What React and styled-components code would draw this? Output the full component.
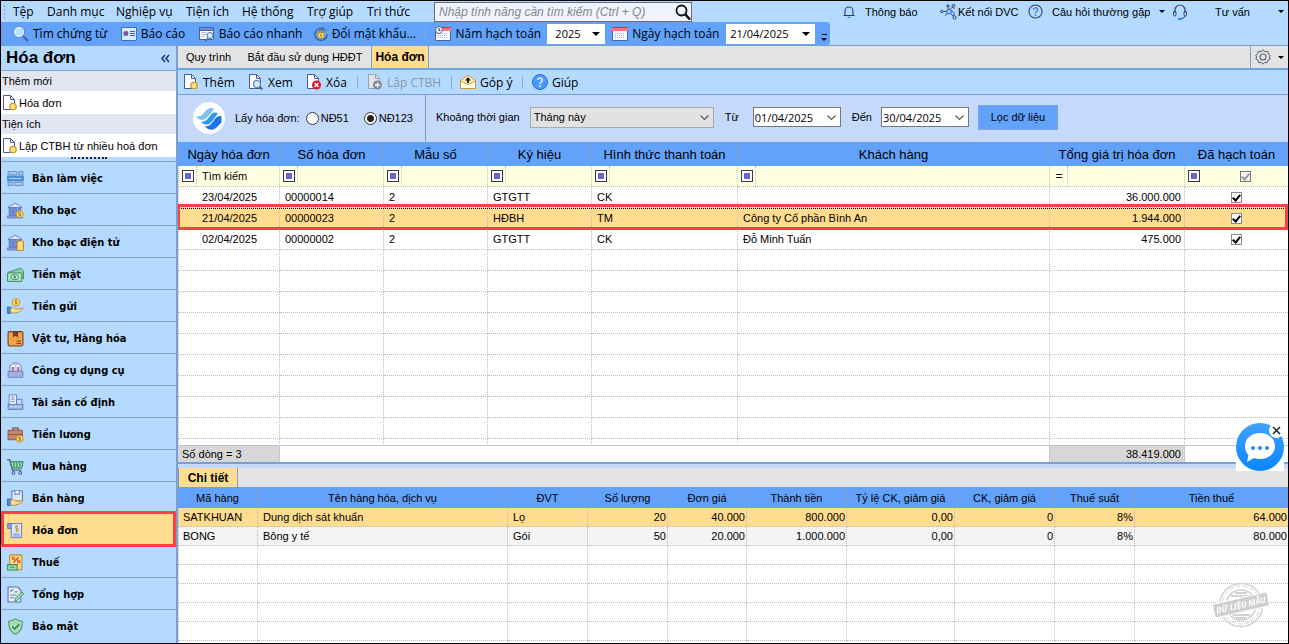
import React, { useState } from "react";
import styled, { createGlobalStyle } from "styled-components";

const ui = `"Open Sans", "Noto Sans", sans-serif`;
const sans = `"Liberation Sans", Arial, sans-serif`;
const tahoma = `"DejaVu Sans Condensed", "DejaVu Sans", sans-serif`;

const sky = "#b5daff";
const blue = "#62a2fb";
const line = "#7ba0d0";
const amber = "#ffdc8f";
const red = "#fa4040";
const grey = "#e3e3e3";
const dots = "1px dotted #bdbdbd";

const GlobalStyle = createGlobalStyle`
  * {
    box-sizing: border-box;
  }
  body {
    margin: 0;
    background: ${sky};
    color: #000;
    font-family: ${sans};
    font-size: 11px;
  }
  button, input, select {
    font: inherit;
    color: inherit;
    margin: 0;
    padding: 0;
  }
  button {
    background: none;
    border: 0;
    text-align: left;
    white-space: nowrap;
  }
  svg {
    flex: none;
    display: block;
  }
`;

const Window = styled.div`
  display: flex;
  flex-direction: column;
  height: 100vh;
  min-height: 600px;
  border: 1px solid #000;
  background: ${sky};
  overflow: hidden;
`;

/* ---------- top bars ---------- */

const MenuBar = styled.nav`
  display: flex;
  align-items: center;
  height: 21px;
  padding-left: 2px;
  font-family: ${ui};
  font-size: 12px;
`;

const Grip = styled.div`
  width: 4px;
  height: 16px;
  margin-right: 6px;
  background: radial-gradient(#8f9fb8 1px, transparent 1px) 0 0 / 3px 4px;
`;

const MenuItem = styled.button`
  width: ${(p) => p.$w}px;
`;

const SearchBox = styled.label`
  display: flex;
  align-items: center;
  width: 258px;
  height: 20px;
  padding-left: 4px;
  background: #f0f4ff;
  border: 1px solid #6d6d6d;
  font-family: ${sans};
  font-size: 12px;
  input {
    flex: 1;
    min-width: 0;
    border: 0;
    outline: 0;
    background: none;
    font-style: italic;
  }
  input::placeholder {
    color: #858585;
  }
`;

const Support = styled.div`
  display: flex;
  align-items: center;
  margin-left: auto;
  font-family: ${sans};
  font-size: 11px;
`;

const SupportItem = styled.button`
  display: flex;
  align-items: center;
  gap: ${(p) => p.$gap || 3}px;
  width: ${(p) => p.$w}px;
  height: 20px;
`;

const Arrow = styled.span`
  width: 0;
  height: 0;
  border: 3px solid transparent;
  border-top-color: #000;
  border-bottom: 0;
  margin-left: ${(p) => (p.$end ? "auto" : "0")};
  margin-right: ${(p) => p.$right || 0}px;
`;

const ToolBar = styled.div`
  display: flex;
  height: 23px;
`;

const ToolStrip = styled.div`
  display: flex;
  align-items: center;
  padding-left: 2px;
  width: 829px;
  background: ${blue};
  border-radius: 0 3px 3px 0;
  font-family: ${ui};
  font-size: 12px;
`;

const Tool = styled.button`
  display: flex;
  align-items: center;
  gap: 4px;
  width: ${(p) => p.$w}px;
  color: ${(p) => (p.disabled ? "#8996a8" : "inherit")};
`;

const ToolLabel = styled.label`
  display: flex;
  align-items: center;
  gap: 4px;
  width: ${(p) => p.$w}px;
  white-space: nowrap;
`;

const Divider = styled.i`
  width: 1px;
  height: 13px;
  margin-right: ${(p) => p.$right || 0}px;
  background: #86a9d9;
`;

const Combo = styled.span`
  display: flex;
  align-items: center;
  position: relative;
  width: ${(p) => p.$w}px;
  height: ${(p) => p.$h || 20}px;
  margin-right: ${(p) => p.$right || 0}px;
  background: ${(p) => (p.$grey ? "#e2e2e2" : "#fff")};
  border: 1px solid ${(p) => p.$border || "#fff"};
  font-family: ${(p) => (p.$grey ? sans : ui)};
  font-size: 11px;
  select, input {
    appearance: none;
    width: 100%;
    height: 100%;
    padding-left: ${(p) => p.$pad || 3}px;
    border: 0;
    outline: 0;
    background: none;
  }
  svg, ${Arrow} {
    position: absolute;
    right: 4px;
    pointer-events: none;
  }
  ${Arrow} {
    border-width: 4px 4px 0;
    margin: 0;
  }
`;

const Overflow = styled.button`
  width: 12px;
  height: 10px;
  margin-top: 10px;
  display: flex;
  flex-direction: column;
  align-items: center;
  gap: 3px;
  &::before {
    content: "";
    width: 5px;
    height: 1px;
    background: #000;
  }
`;

/* ---------- body ---------- */

const Body = styled.div`
  flex: 1;
  min-height: 0;
  display: flex;
  border-top: 1px solid ${line};
`;

const Sidebar = styled.aside`
  flex: none;
  width: 177px;
  border-right: 2px solid ${line};
  display: flex;
  flex-direction: column;
`;

const SideTitle = styled.div`
  display: flex;
  align-items: center;
  justify-content: space-between;
  height: 25px;
  padding: 0 6px 0 5px;
  border-bottom: 1px solid ${line};
  h1 {
    margin: 0;
    font-size: 17px;
    line-height: 24px;
  }
`;

const SideGroup = styled.h2`
  margin: 0;
  height: 20px;
  line-height: 20px;
  padding-left: 1px;
  background: #e2e6f0;
  font-size: 11px;
  font-weight: normal;
`;

const SideLink = styled.a`
  display: flex;
  align-items: center;
  gap: 1px;
  height: 23px;
  padding-left: 1px;
  background: #fff;
  color: #000;
  text-decoration: none;
  white-space: nowrap;
`;

const Splitter = styled.div`
  height: 4px;
  display: flex;
  justify-content: center;
  &::before {
    content: "";
    width: 36px;
    border-top: 2px dotted #223;
    height: 0;
  }
`;

const NavLink = styled.a`
  position: relative;
  flex: none;
  display: flex;
  align-items: center;
  gap: 8px;
  height: 32px;
  padding: 1px 0 0 6px;
  border-top: 1px solid ${line};
  color: #000;
  text-decoration: none;
  font-family: ${tahoma};
  font-size: 11px;
  font-weight: bold;
  background: ${(p) => (p.$active ? amber : "transparent")};
  &::after {
    content: "";
    display: ${(p) => (p.$active ? "block" : "none")};
    position: absolute;
    inset: -3px 0 -2px;
    border: 3px solid ${red};
    z-index: 1;
  }
`;

const Content = styled.main`
  flex: 1;
  min-width: 0;
  display: flex;
  flex-direction: column;
`;

const Tabs = styled.div`
  display: flex;
  height: 24px;
  background: ${grey};
  border-bottom: 2px solid #6ea4e6;
`;

const Tab = styled.button`
  width: ${(p) => p.$w}px;
  text-align: center;
  background: ${(p) => (p.$active ? amber : "transparent")};
  font-weight: ${(p) => (p.$active ? "bold" : "normal")};
  font-size: ${(p) => (p.$active ? 12 : 11)}px;
  border: solid ${line};
  border-width: 0 ${(p) => (p.$active ? 1 : 0)}px;
`;

const Settings = styled.button`
  display: flex;
  align-items: center;
  gap: 7px;
  margin-left: auto;
  padding: 0 4px;
  border-left: 1px solid ${line};
`;

const Actions = styled.div`
  display: flex;
  align-items: center;
  height: 25px;
  padding-left: 5px;
  border-bottom: 1px solid ${line};
  font-family: ${ui};
  font-size: 12px;
`;

const Filters = styled.form`
  display: flex;
  align-items: center;
  height: 47px;
  padding-bottom: 3px;
  background: #c4d9fb;
  white-space: nowrap;
`;

const Source = styled.fieldset`
  display: flex;
  align-items: center;
  align-self: stretch;
  width: 248px;
  margin: 0 0 -3px;
  padding: 0 0 1px 15px;
  border: 0;
  border-right: 1px solid ${line};
  > span {
    margin: 0 6px 0 10px;
  }
`;

const Radio = styled.label`
  display: flex;
  align-items: center;
  gap: 2px;
  width: 58px;
  input {
    appearance: none;
    width: 13px;
    height: 13px;
    border: 1px solid #333;
    border-radius: 50%;
    background: #fff;
  }
  input:checked {
    background: radial-gradient(#222 3px, #fff 4px);
  }
`;

const FieldLabel = styled.label`
  margin: 0 ${(p) => p.$right}px 0 ${(p) => p.$left}px;
`;

const Submit = styled.button`
  width: 80px;
  height: 25px;
  margin-left: 9px;
  background: ${blue};
  border: 1px solid #7ea6d8;
  text-align: center;
`;

/* ---------- tables ---------- */

const Pane = styled.section`
  flex: ${(p) => (p.$grow ? "1" : "none")};
  height: ${(p) => (p.$grow ? "auto" : "156px")};
  min-height: 0;
  overflow: hidden;
  background: #fff;
`;

const Grid = styled.table`
  width: 100%;
  table-layout: fixed;
  border-collapse: separate;
  border-spacing: 0;
  th {
    height: ${(p) => p.$head}px;
    padding: 0;
    background: ${blue};
    border-right: 1px solid #7a9fd0;
    font-size: ${(p) => p.$headFont}px;
    font-weight: normal;
    text-align: center;
    white-space: nowrap;
  }
  td {
    height: ${(p) => p.$row}px;
    padding: 0 ${(p) => p.$pad}px 0 5px;
    border-right: ${dots};
    border-bottom: ${dots};
    white-space: nowrap;
    line-height: 14px;
  }
  td:first-child {
    border-left: ${dots};
    padding-left: 4px;
  }
  th:last-child, td:last-child {
    border-right: 0;
  }
`;

const Cell = styled.td`
  text-align: ${(p) => p.$align || "left"};
`;

const CheckCell = styled.td`
  && {
    padding: 0;
  }
`;

const SearchRow = styled.tr`
  background: #ffffe1;
  && td {
    padding: 0 0 0 3px;
  }
`;

const SearchCell = styled.div`
  display: flex;
  align-items: center;
  height: 100%;
  i {
    flex: none;
    width: 12px;
    height: 12px;
    border: 1px solid #333366;
    background: #6666cc;
    box-shadow: inset 0 0 0 2px #fff;
  }
  b {
    width: 12px;
    font-size: 12px;
    font-weight: normal;
    text-align: center;
  }
  span {
    align-self: stretch;
    flex: 1;
    display: flex;
    align-items: center;
    justify-content: ${(p) => (p.$center ? "center" : "flex-start")};
    margin-left: 2px;
    padding: 0 ${(p) => (p.$center ? 0 : 5)}px;
    border-left: ${(p) => (p.$center ? "0" : dots)};
  }
`;

const Row = styled.tr`
  background: ${(p) => (p.$selected ? amber : p.$alt ? "#f4f4f4" : "#fff")};
`;

const Marked = styled(Row)`
  position: relative;
  z-index: 1;
  td:first-child::before {
    content: "";
    position: absolute;
    inset: 0 0 0 1px;
    border: 1px dotted #000;
  }
  td:first-child::after {
    content: "";
    position: absolute;
    inset: -4px 0 -1px -1px;
    border: 3px solid ${red};
  }
`;

const Check = styled.input.attrs({ type: "checkbox" })`
  appearance: none;
  position: relative;
  display: block;
  margin: 0 auto;
  width: 11px;
  height: 11px;
  border: 1px solid ${(p) => (p.$dim ? "#777" : "#8a8a8a")};
  background: ${(p) => (p.$dim ? "#f4f4f4" : "#fff")};
  &:checked::after {
    content: "";
    box-sizing: border-box;
    position: absolute;
    left: 2px;
    top: 0;
    width: 5px;
    height: 8px;
    border: solid ${(p) => (p.$dim ? "#999" : "#000")};
    border-width: 0 2px 2px 0;
    transform: rotate(40deg);
  }
`;

const Summary = styled.div`
  flex: none;
  display: flex;
  height: 19px;
  line-height: 16px;
  background: #fff;
  border-top: 1px solid #b9c8dc;
  border-bottom: 2px solid ${line};
  div {
    padding: 0 3px 0 4px;
    background: #d7d7d7;
    border-right: 1px solid #b9c8dc;
  }
  div:first-child {
    width: 102px;
    margin-right: auto;
  }
  div:last-child {
    width: 136px;
    margin-right: 103px;
    border-left: 1px solid #b9c8dc;
    text-align: right;
  }
`;

const DetailTabs = styled.div`
  flex: none;
  display: flex;
  height: 23px;
  border-top: 4px solid #c4d9fb;
  background: ${grey};
`;

/* ---------- floating things ---------- */

const Chat = styled.div`
  position: fixed;
  right: 5px;
  bottom: 173px;
  width: 48px;
  height: 48px;
  background: linear-gradient(transparent 28px, #fff 28px);
`;

const ChatOpen = styled.button`
  display: block;
`;

const ChatClose = styled.button`
  position: absolute;
  top: 0;
  right: 0;
  width: 15px;
  height: 15px;
  background: #fff;
  border-radius: 50%;
  display: flex;
  align-items: center;
  justify-content: center;
`;

const Stamp = styled.div`
  position: fixed;
  right: 19px;
  bottom: 16px;
  pointer-events: none;
`;

/* ---------- icons ---------- */

const Svg = ({ size = 16, box = 16, children, ...rest }) => (
  <svg width={size} height={size} viewBox={`0 0 ${box} ${box}`} fill="none" aria-hidden="true" {...rest}>
    {children}
  </svg>
);

const PageIcon = ({ badge, dim }) => (
  <Svg>
    <path d="M1.500 .5h7l4 4v10h-11z" fill={dim ? "#dde3ea" : "#fff"} stroke={dim ? "#9aa0a8" : "#4658a5"} />
    <path d="M8.500 .5v4h4" stroke={dim ? "#9aa0a8" : "#4658a5"} />
    {badge === "new" && <circle cx="11" cy="11.500" r="3.200" fill="#ffe08a" stroke="#c99a1c" strokeWidth="1.300" />}
    {badge === "view" && (
      <g>
        <circle cx="9" cy="10" r="3.500" fill="#d8ecff" stroke="#5b83b8" strokeWidth="1.200" />
        <path d="M11.500 12.500l3 3" stroke="#4d6ea8" strokeWidth="2" />
      </g>
    )}
    {badge === "del" && (
      <g>
        <circle cx="10.500" cy="11" r="4.500" fill="#e51420" />
        <path d="M8.500 9l4 4m0-4l-4 4" stroke="#fff" strokeWidth="1.500" />
      </g>
    )}
    {badge === "add" && (
      <g>
        <circle cx="10.500" cy="11" r="4.500" fill="#858a90" />
        <path d="M10.500 8.500v5M8 11h5" stroke="#fff" strokeWidth="1.300" />
      </g>
    )}
  </Svg>
);

const Chevron = () => (
  <Svg size={9} box={9}>
    <path d="M.5 2.500l4 4 4-4" stroke="#555" strokeWidth="1.100" />
  </Svg>
);

const FindIcon = () => (
  <Svg>
    <circle cx="6" cy="6" r="5.400" fill="#b9e0ff" stroke="#4f76b4" strokeWidth=".8" />
    <circle cx="6" cy="6" r="4.400" stroke="#e4f1ff" strokeWidth="1.200" />
    <path d="M10 10l5 5" stroke="#47609c" strokeWidth="2.200" />
  </Svg>
);

const ReportIcon = () => (
  <Svg>
    <path d="M.5 1.500h15v13H.5z" fill="#d9ecff" stroke="#3f73b5" />
    <circle cx="4.800" cy="7.500" r="2.500" fill="#4b6cc0" />
    <path d="M4.800 7.500V5a2.500 2.500 0 0 1 2.500 2.500z" fill="#e33" />
    <path d="M9 5.500h5M9 7.500h5M9 9.500h5" stroke="#3c5ea5" />
  </Svg>
);

const QuickReportIcon = () => (
  <Svg>
    <path d="M.5 1.500h14v12H.5z" fill="#fff" stroke="#4164ad" />
    <path d="M.5 1.500h14v3H.5z" fill="#6a8bd8" stroke="#4164ad" />
    <path d="M2.500 6.500h5M2.500 8.500h5M2.500 10.500h4" stroke="#6b7fae" strokeDasharray="1 1" />
    <circle cx="11" cy="9.500" r="3" fill="#d4ebff" stroke="#4e73a8" />
    <path d="M9 12l-3 3.500" stroke="#4e73a8" strokeWidth="1.600" />
  </Svg>
);

const LockIcon = () => (
  <Svg size={14}>
    <path d="M11 2A7 7 0 1 0 15 8M11 14a7 7 0 0 0 4-5" stroke="#2f5c9c" strokeWidth="1.300" />
    <path d="M10.500 0v3.500h4" stroke="#2f5c9c" />
    <path d="M5.500 7V5.500a2.500 2.500 0 0 1 5 0V7" stroke="#8a7b3c" strokeWidth="1.200" />
    <rect x="4.500" y="6.500" width="7" height="6" fill="#ffd867" stroke="#ad8a1f" />
    <path d="M8 8.500v2" stroke="#55450f" strokeWidth="1.300" />
  </Svg>
);

const CalendarIcon = ({ clock }) => (
  <Svg>
    <path d="M.5 2.500h15v12H.5z" fill="#f6f8ff" stroke="#4762a5" />
    <path d="M0 1h16v4H0z" fill="#f2787c" />
    <path d="M0 1h16v1H0z" fill="#c9333a" />
    <path d="M3 7.500h10M3 9.500h10M3 11.500h10" stroke="#a8b2cc" strokeDasharray="1 1" />
    {clock && (
      <g>
        <circle cx="4" cy="4" r="3.500" fill="#e8f2ff" stroke="#56719d" />
        <path d="M4 2v2.500h1.500" stroke="#222" strokeWidth=".9" />
      </g>
    )}
  </Svg>
);

const BellIcon = () => (
  <Svg size={12} box={12}>
    <path d="M.5 9.500h11M2 9.500V5a4 4 0 0 1 8 0v4.500" stroke="#2d3a5c" strokeWidth="1.100" />
    <path d="M4.500 11q1.500 1 3 0" stroke="#3d85e0" strokeWidth="1.200" />
  </Svg>
);

const LinkIcon = () => (
  <Svg size={17} box={17}>
    <path d="M3 8.500h4M8.500 6.500l-.5-2M10 6.500l2.500-2.500M12.500 4l2 2M10 10l3.500 3.500M8 10l-3 2.500" stroke="#3a4a6e" />
    <path d="M11.500 8q3 0 2.500 5" stroke="#3a4a6e" />
    <circle cx="9" cy="8.500" r="2.200" fill="#b5daff" stroke="#2f7fe6" strokeWidth="1.300" />
    <g fill="#b5daff" stroke="#2d3a5c">
      <circle cx="1.800" cy="8.500" r="1.200" />
      <circle cx="8" cy="3" r="1.200" />
      <circle cx="13.500" cy="2.800" r="1.400" />
      <circle cx="14.500" cy="14.500" r="1.600" />
    </g>
  </Svg>
);

const HelpRing = () => (
  <Svg size={15}>
    <circle cx="8" cy="8" r="7" stroke="#2f3f66" strokeWidth="1.100" />
    <path d="M5.800 6.300a2.200 2.200 0 1 1 3.300 1.800Q8 8.700 8 9.800" stroke="#2f7fe6" strokeWidth="1.300" />
    <circle cx="8" cy="11.800" r=".9" fill="#2f7fe6" />
  </Svg>
);

const HeadsetIcon = () => (
  <Svg>
    <path d="M3 9V6a5 5 0 0 1 10 0v3" stroke="#34446c" strokeWidth="1.200" />
    <rect x="1.500" y="7" width="2.500" height="5" rx="1.200" stroke="#34446c" />
    <rect x="12" y="7" width="2.500" height="5" rx="1.200" stroke="#34446c" />
    <path d="M13 12q-.5 2.500-4 2.500" stroke="#34446c" />
    <path d="M6 15h4" stroke="#2f88ff" strokeWidth="2" />
  </Svg>
);

const GearIcon = () => (
  <Svg>
    <path d="M8 .8l2 1.900 2.800-.3.700 2.700 1.800 1.300L14.300 8l1 2-2.300 1.100-.8 2.600-2.400-.4L8 15.200l-1.800-1.900-2.400.4-.8-2.600L.7 10l1-2-1-1.600L2.500 5.100l.7-2.700 2.800.3z" stroke="#5a6377" strokeLinejoin="round" />
    <circle cx="8" cy="8" r="3" stroke="#5a6377" strokeWidth="1.100" />
  </Svg>
);

const FeedbackIcon = () => (
  <Svg>
    <path d="M.5 6.500L8 1l7.500 5.500v8H.5z" fill="#fff0b8" stroke="#c09a2c" />
    <path d="M.5 7L8 10.500 15.500 7v7.500H.5z" fill="#fffbe8" stroke="#c09a2c" />
    <path d="M8 3L5 6.500h2V9h2V6.500h2z" fill="#222" />
  </Svg>
);

const HelpIcon = () => (
  <Svg>
    <circle cx="8" cy="8" r="7.500" fill="#4b97ff" stroke="#2d72d6" />
    <path d="M5.800 6a2.200 2.200 0 1 1 3.300 2Q8 8.700 8 10" stroke="#fff" strokeWidth="1.300" />
    <circle cx="8" cy="12" r=".9" fill="#fff" />
  </Svg>
);

const InvoiceLogo = () => (
  <svg width="32" height="32" viewBox="0 0 32 32" aria-hidden="true">
    <circle cx="16" cy="16" r="16" fill="#fff" />
    <path d="M3 14c4 1.500 6.500-1 9-4.500C14.500 6 18 5 21.500 7L14 15.500c-3 3.500-8 3.500-11-1.500z" fill="#7cc3f2" />
    <path d="M7.500 19.500c4 1 6.500-1.500 9-5 2.500-3.500 5-5 8.500-3L18.500 20c-3 3.500-8 3.500-11-.5z" fill="#2b9aec" />
    <path d="M11.500 24c4 1 6.500-1.500 9-5 2-3 4.500-6 8-4.500v6L23 26c-3.500 3-8.500 2-11.500-2z" fill="#1f74ea" />
  </svg>
);

const coin = (cx, cy, r = 3.3) => (
  <g>
    <circle cx={cx} cy={cy} r={r} fill="#ffdc73" stroke="#b98b2a" strokeWidth=".8" />
    <path d={`M${cx + 1} ${cy - 1.4}h-2v1.400h2v1.400h-2M${cx} ${cy - 2.2}v4.400`} stroke="#a87718" strokeWidth=".7" />
  </g>
);

const bank = (
  <g stroke="#5d70b4" strokeWidth=".8">
    <path d="M.8 5.200L7.500 1l6.700 4.200z" fill="#dfe8ff" />
    <path d="M2 6h3v6.500H2zM6.200 6H9v6.500H6.200zM10.500 6H13v6.500h-2.500z" fill="#7b8fd4" />
    <path d="M.5 13h14v2H.5z" fill="#8fa2e0" />
  </g>
);

const navIcons = {
  desk: (
    <g stroke="#5583bd" strokeWidth=".8">
      <path d="M1 1.500h8v3H1zM11 1.500h4v3h-4zM1 11.500h4v3H1zM7 11.500h8v3H7z" fill="#a9cdf7" />
      <path d="M.5 5.700h15v4.600H.5z" fill="#4e8fe8" />
      <path d="M2 8h11" stroke="#bfe0ff" />
    </g>
  ),
  bank: <g>{bank}{coin(12, 11.5)}</g>,
  ebank: <g>{bank}<rect x="9.500" y="6.500" width="6" height="9" rx="1" fill="#ffe07c" stroke="#b98b2a" /></g>,
  cash: (
    <g stroke="#3d8a62" strokeWidth=".9">
      <path d="M1 6L13 2l2.500 3v7z" fill="#8fd4a8" />
      <path d="M.5 6.500h13.500v8H.5z" fill="#a9e2bb" />
      <ellipse cx="7.300" cy="10.500" rx="3.500" ry="2.500" fill="#dcf7e2" />
      <circle cx="7.300" cy="10.500" r="1" fill="#3d8a62" />
    </g>
  ),
  deposit: (
    <g>
      {coin(8.5, 4, 3.6)}
      <path d="M.5 8.500h3v6h-3z" fill="#3f8ee8" stroke="#2a66b8" strokeWidth=".8" />
      <path d="M3.500 9.500q3-1.500 4.500 1h3l4-1.200q.8 1-4.500 4.200-3 1-7 .3z" fill="#ffdf9a" stroke="#b98b3a" strokeWidth=".8" />
    </g>
  ),
  goods: (
    <g>
      <rect x="1" y="1.500" width="14" height="13.500" rx="1.500" fill="#f0a24a" stroke="#6b4126" />
      <path d="M5.500 1.500h5v5.500L8 5.500 5.500 7z" fill="#7b3f2c" />
      <path d="M9 10.500h4M9 12.700h4" stroke="#6b4126" />
    </g>
  ),
  tools: (
    <g stroke="#6f7fb8" strokeWidth=".8">
      <path d="M2.500 9V4q0-1 1.500-1.500L6 .8h4L12 2.500q1.500.5 1.500 1.500v5z" fill="#c5cff2" />
      <path d="M5.500 9V4M10.500 9V4" stroke="#b5645a" strokeWidth="1.500" />
      <path d="M4 4h3M9 4h3" stroke="#fff" strokeWidth="1.200" />
      <path d="M1 8.800h14v5.700H1z" fill="#a3b0e4" />
    </g>
  ),
  assets: (
    <g stroke="#5b74b8" strokeWidth=".8">
      <path d="M2 .8h7v10H2z" fill="#eaf0ff" />
      <path d="M4 3h3M4 5h3M4 7h3" />
      <path d="M9 5h5v6H9z" fill="#cddaf8" />
      <path d="M1 9.800h14v4.700H1z" fill="#9fb4ec" />
      <path d="M3 12h2M7 12h2M11 12h2" stroke="#fff" />
    </g>
  ),
  salary: (
    <g>
      <path d="M5.500 4V2h5v2" stroke="#7a4b3c" strokeWidth="1.200" />
      <rect x="1" y="4" width="13.500" height="9" rx="1" fill="#c98568" stroke="#8a5947" />
      <path d="M1 8h13" stroke="#8a5947" />
      {coin(12, 12)}
    </g>
  ),
  cart: (
    <g>
      <path d="M0 1.500h2.500L5 11.500h8.500" stroke="#4c5f92" strokeWidth="1.200" />
      <path d="M3.200 3.500h12l-1.400 6H4.700z" fill="#8fd9b0" stroke="#37795a" strokeWidth=".9" />
      <path d="M6.500 4v5M9.200 4v5M12 4v5" stroke="#37795a" strokeWidth=".9" />
      <circle cx="6" cy="14" r="1.300" stroke="#4c5f92" />
      <circle cx="12.500" cy="14" r="1.300" stroke="#4c5f92" />
    </g>
  ),
  sell: (
    <g strokeWidth=".9">
      <path d="M4.500 .8h10v9.700h-10z" fill="#dfe7ff" stroke="#5a6fb0" />
      <path d="M7.500 1v3.500l2-1 2 1V1" stroke="#5a6fb0" fill="#fff" />
      <path d="M.5 8.500h3v6h-3z" fill="#3f8ee8" stroke="#2a66b8" />
      <path d="M3.500 9.500q3-1.500 4.500 1h3l4-.7q.8 1-4.500 3.700-3 1.500-7 .8z" fill="#ffdf9a" stroke="#b98b3a" />
    </g>
  ),
  invoice: (
    <g strokeWidth=".9" stroke="#6378b5">
      <path d="M.8 1.500h13v13.200H4V6H.8z" fill="#dbe6ff" />
      <path d="M.8 1.500H4V6H.8z" fill="#8ea6e6" />
      <path d="M6 10.500h6v4H6z" fill="#9fb4ec" stroke="none" />
      <path d="M10.500 4H8v2h2.500v2.500H8M9.200 3v6.500" stroke="#c99722" />
    </g>
  ),
  tax: (
    <g>
      <rect x="2.500" y=".8" width="11.500" height="14" rx="1" fill="#ffdd7c" stroke="#b98b2a" />
      <path d="M6 8l5-5" stroke="#d8473c" strokeWidth="1.200" />
      <circle cx="6" cy="4" r="1.200" stroke="#d8473c" />
      <circle cx="11" cy="7" r="1.200" stroke="#d8473c" />
      <path d="M.6 10h9v5h-9z" fill="#9bdcae" stroke="#3d8a62" />
      <path d="M3 12.500h4" stroke="#3d8a62" />
    </g>
  ),
  general: (
    <g>
      <path d="M1 1h9l3 3v11H1z" fill="#e8eeff" stroke="#5a6fb0" />
      <path d="M3 4l1 1 2-2M7 5.500h3M3 8.500h6M3 11h4" stroke="#5a8a70" />
      <path d="M14 5.500l1.800 1.800-6 6-2.500.900.700-2.600z" fill="#9be0a8" stroke="#3d8a62" strokeWidth=".9" />
    </g>
  ),
  shield: (
    <g>
      <path d="M8 .8q3 2 6.500 2.200Q15 12 8 15.300 1 12 1.500 3 5 2.800 8 .8z" fill="#a5ddb5" stroke="#569a74" />
      <path d="M5 8l2.200 2.300L11.500 6" stroke="#2f7d55" strokeWidth="1.500" />
    </g>
  ),
};

/* ---------- data ---------- */

const menus = [
  ["Tệp", 34],
  ["Danh mục", 69],
  ["Nghiệp vụ", 70],
  ["Tiện ích", 56],
  ["Hệ thống", 65],
  ["Trợ giúp", 60],
  ["Tri thức", 67],
];

const navItems = [
  ["desk", "Bàn làm việc"],
  ["bank", "Kho bạc"],
  ["ebank", "Kho bạc điện tử"],
  ["cash", "Tiền mặt"],
  ["deposit", "Tiền gửi"],
  ["goods", "Vật tư, Hàng hóa"],
  ["tools", "Công cụ dụng cụ"],
  ["assets", "Tài sản cố định"],
  ["salary", "Tiền lương"],
  ["cart", "Mua hàng"],
  ["sell", "Bán hàng"],
  ["invoice", "Hóa đơn"],
  ["tax", "Thuế"],
  ["general", "Tổng hợp"],
  ["shield", "Bảo mật"],
];

const invoiceCols = [
  ["Ngày hóa đơn", 102],
  ["Số hóa đơn", 104],
  ["Mẫu số", 104],
  ["Ký hiệu", 104],
  ["Hình thức thanh toán", 146],
  ["Khách hàng"],
  ["Tổng giá trị hóa đơn", 135],
  ["Đã hạch toán", 103],
];

const invoices = [
  ["23/04/2025", "00000014", "2", "GTGTT", "CK", "", "36.000.000"],
  ["21/04/2025", "00000023", "2", "HĐBH", "TM", "Công ty Cổ phần Bình An", "1.944.000"],
  ["02/04/2025", "00000002", "2", "GTGTT", "CK", "Đỗ Minh Tuấn", "475.000"],
];

const detailCols = [
  ["Mã hàng", 80],
  ["Tên hàng hóa, dịch vụ", 250],
  ["ĐVT", 80],
  ["Số lượng", 80],
  ["Đơn giá", 79],
  ["Thành tiền", 100],
  ["Tỷ lệ CK, giảm giá", 108],
  ["CK, giảm giá", 100],
  ["Thuế suất", 80],
  ["Tiền thuế"],
];

const details = [
  ["SATKHUAN", "Dung dịch sát khuẩn", "Lọ", "20", "40.000", "800.000", "0,00", "0", "8%", "64.000"],
  ["BONG", "Bông y tế", "Gói", "50", "20.000", "1.000.000", "0,00", "0", "8%", "80.000"],
];

const blanks = (count, cols) =>
  Array.from({ length: count }, (_, i) => (
    <Row key={`blank${i}`}>
      {cols.map((c) => (
        <td key={c[0]} />
      ))}
    </Row>
  ));

const Columns = ({ cols }) => (
  <>
    <colgroup>
      {cols.map(([name, w]) => (
        <col key={name} width={w} />
      ))}
    </colgroup>
    <thead>
      <tr>
        {cols.map(([name]) => (
          <th key={name} scope="col">{name}</th>
        ))}
      </tr>
    </thead>
  </>
);

const Header = () => (
  <>
    <MenuBar>
      <Grip />
      {menus.map(([name, w]) => (
        <MenuItem key={name} $w={w}>{name}</MenuItem>
      ))}
      <SearchBox>
        <input aria-label="Tìm kiếm tính năng" placeholder="Nhập tính năng cần tìm kiếm (Ctrl + Q)" />
        <Svg>
          <circle cx="6.500" cy="6.500" r="5" stroke="#111" strokeWidth="1.800" />
          <path d="M10 10l5 5.500" stroke="#111" strokeWidth="2.600" />
        </Svg>
      </SearchBox>
      <Support>
        <SupportItem $w={97} $gap={10}><BellIcon />Thông báo</SupportItem>
        <SupportItem $w={88} $gap={1}><LinkIcon />Kết nối DVC</SupportItem>
        <SupportItem $w={144} $gap={9}><HelpRing />Câu hỏi thường gặp<Arrow $end $right={10} /></SupportItem>
        <SupportItem $w={116} $gap={27}><HeadsetIcon />Tư vấn<Arrow $end $right={4} /></SupportItem>
      </Support>
    </MenuBar>
    <ToolBar>
      <ToolStrip>
        <Grip />
        <Tool $w={108}><FindIcon />Tìm chứng từ</Tool>
        <Tool $w={78}><ReportIcon />Báo cáo</Tool>
        <Tool $w={115}><QuickReportIcon />Báo cáo nhanh</Tool>
        <Tool $w={112}><LockIcon />Đổi mật khẩu...</Tool>
        <Divider $right={9} />
        <ToolLabel htmlFor="year" $w={112}><CalendarIcon clock />Năm hạch toán</ToolLabel>
        <Combo $w={58} $pad={7} $right={7}>
          <select id="year" defaultValue="2025"><option>2025</option></select>
          <Arrow />
        </Combo>
        <ToolLabel htmlFor="day" $w={114}><CalendarIcon />Ngày hạch toán</ToolLabel>
        <Combo $w={89} $right={3}>
          <input id="day" defaultValue="21/04/2025" />
          <Arrow />
        </Combo>
        <Overflow aria-label="Thêm công cụ"><Arrow /></Overflow>
      </ToolStrip>
    </ToolBar>
  </>
);

const SideMenu = () => (
  <Sidebar>
    <SideTitle>
      <h1>Hóa đơn</h1>
      <button aria-label="Thu gọn">
        <Svg size={9} box={9}>
          <path d="M4 1L1 4.500 4 8M8 1L5 4.500 8 8" stroke="#14348c" strokeWidth="1.500" />
        </Svg>
      </button>
    </SideTitle>
    <SideGroup>Thêm mới</SideGroup>
    <SideLink href="#new"><PageIcon badge="new" />Hóa đơn</SideLink>
    <SideGroup>Tiện ích</SideGroup>
    <SideLink href="#batch"><PageIcon badge="new" />Lập CTBH từ nhiều hoá đơn</SideLink>
    <Splitter />
    {navItems.map(([icon, name]) => (
      <NavLink key={icon} href={`#${icon}`} $active={icon === "invoice"}>
        <Svg size={17}>{navIcons[icon]}</Svg>
        {name}
      </NavLink>
    ))}
  </Sidebar>
);

const FilterBar = () => {
  const [source, setSource] = useState("NĐ123");
  return (
    <Filters onSubmit={(e) => e.preventDefault()}>
      <Source>
        <InvoiceLogo />
        <span>Lấy hóa đơn:</span>
        {["NĐ51", "NĐ123"].map((s) => (
          <Radio key={s}>
            <input type="radio" name="source" checked={source === s} onChange={() => setSource(s)} />
            {s}
          </Radio>
        ))}
      </Source>
      <FieldLabel htmlFor="period" $left={10} $right={10}>Khoảng thời gian</FieldLabel>
      <Combo $w={184} $h={21} $grey $border="#a9a9a9">
        <select id="period" defaultValue="Tháng này"><option>Tháng này</option></select>
        <Chevron />
      </Combo>
      <FieldLabel htmlFor="from" $left={11} $right={14}>Từ</FieldLabel>
      <Combo $w={88} $border="#767676" $pad={1}>
        <input id="from" defaultValue="01/04/2025" />
        <Chevron />
      </Combo>
      <FieldLabel htmlFor="to" $left={11} $right={9}>Đến</FieldLabel>
      <Combo $w={88} $border="#767676" $pad={1}>
        <input id="to" defaultValue="30/04/2025" />
        <Chevron />
      </Combo>
      <Submit type="submit">Lọc dữ liệu</Submit>
    </Filters>
  );
};

const InvoiceTable = () => (
  <Grid $head={24} $headFont={13} $row={21} $pad={3}>
    <Columns cols={invoiceCols} />
    <tbody>
      <SearchRow>
        {invoiceCols.map(([name], i) => (
          <td key={name}>
            <SearchCell $center={i === 7}>
              {i === 6 ? <b>=</b> : <i />}
              <span>
                {i === 0 && "Tìm kiếm"}
                {i === 7 && <Check aria-label={name} defaultChecked $dim />}
              </span>
            </SearchCell>
          </td>
        ))}
      </SearchRow>
      {invoices.map((inv, r) => {
        const Line = r === 1 ? Marked : Row;
        return (
          <Line key={inv[1]} $selected={r === 1}>
            {inv.map((v, i) => (
              <Cell key={i} $align={i === 0 ? "center" : i === 6 ? "right" : "left"}>{v}</Cell>
            ))}
            <CheckCell>
              <Check aria-label={`Đã hạch toán ${inv[1]}`} defaultChecked />
            </CheckCell>
          </Line>
        );
      })}
      {blanks(10, invoiceCols)}
    </tbody>
  </Grid>
);

const DetailTable = () => (
  <Grid $head={21} $headFont={11} $row={19} $pad={1}>
    <Columns cols={detailCols} />
    <tbody>
      {details.map((d, r) => (
        <Row key={d[0]} $selected={r === 0} $alt={r === 1}>
          {d.map((v, i) => (
            <Cell key={i} $align={i > 2 ? "right" : "left"}>{v}</Cell>
          ))}
        </Row>
      ))}
      {blanks(6, detailCols)}
    </tbody>
  </Grid>
);

export default function App() {
  return (
    <Window>
      <GlobalStyle />
      <Header />
      <Body>
        <SideMenu />
        <Content>
          <Tabs>
            <Tab $w={61}>Quy trình</Tab>
            <Tab $w={132}>Bắt đầu sử dụng HĐĐT</Tab>
            <Tab $w={58} $active>Hóa đơn</Tab>
            <Settings aria-label="Tùy chọn"><GearIcon /><Arrow /></Settings>
          </Tabs>
          <Actions>
            <Tool $w={65}><PageIcon badge="new" />Thêm</Tool>
            <Tool $w={58}><PageIcon badge="view" />Xem</Tool>
            <Tool $w={51}><PageIcon badge="del" />Xóa</Tool>
            <Divider $right={9} />
            <Tool $w={84} disabled><PageIcon badge="add" dim />Lập CTBH</Tool>
            <Divider $right={8} />
            <Tool $w={62}><FeedbackIcon />Góp ý</Tool>
            <Divider $right={9} />
            <Tool $w={50}><HelpIcon />Giúp</Tool>
          </Actions>
          <FilterBar />
          <Pane $grow>
            <InvoiceTable />
          </Pane>
          <Summary>
            <div>Số dòng = 3</div>
            <div>38.419.000</div>
          </Summary>
          <DetailTabs>
            <Tab $w={60} $active>Chi tiết</Tab>
          </DetailTabs>
          <Pane>
            <DetailTable />
          </Pane>
        </Content>
      </Body>
      <Stamp>
        <svg width="58" height="46" viewBox="0 0 58 46" fill="none" stroke="#d2d2d2" aria-hidden="true">
          <circle cx="29" cy="23" r="21.500" strokeWidth="1.500" />
          <circle cx="29" cy="23" r="19" strokeDasharray="5 2" />
          <circle cx="29" cy="23" r="15" strokeWidth="1.500" />
          <path d="M23 11h12M19 14h20M20 33h18M24 36h10" strokeWidth="2" />
          <g transform="rotate(-13 29 23)">
            <rect x="1" y="16" width="56" height="14" rx="1" fill="#cfcfcf" stroke="#fff" />
            <text x="29" y="26" textAnchor="middle" fill="#fff" stroke="none" fontFamily="Noto Sans" fontSize="8" fontStyle="italic" fontWeight="bold">
              DỮ LIỆU MẪU
            </text>
          </g>
        </svg>
      </Stamp>
      <Chat>
        <ChatOpen aria-label="Trò chuyện">
          <svg width="48" height="48" viewBox="0 0 48 48" aria-hidden="true">
            <defs>
              <linearGradient id="bubble" x1="0" y1="0" x2="0" y2="1">
                <stop offset="0" stopColor="#3fa2ff" />
                <stop offset="1" stopColor="#0a86ff" />
              </linearGradient>
            </defs>
            <circle cx="24" cy="24" r="24" fill="url(#bubble)" />
            <path d="M24 10c9 0 15 6 15 13s-6 13-15 13c-2 0-4-.4-6-1L11 39l1.500-7C10 30 9 26 9 23c0-7 6-13 15-13z" fill="#fff" />
            <circle cx="17" cy="25" r="2" fill="#1d8fff" />
            <circle cx="24" cy="25" r="2" fill="#1d8fff" />
            <circle cx="31" cy="25" r="2" fill="#1d8fff" />
          </svg>
        </ChatOpen>
        <ChatClose aria-label="Đóng">
          <Svg size={9} box={9}>
            <path d="M1 1l7 7M8 1L1 8" stroke="#222" strokeWidth="1.500" />
          </Svg>
        </ChatClose>
      </Chat>
    </Window>
  );
}
